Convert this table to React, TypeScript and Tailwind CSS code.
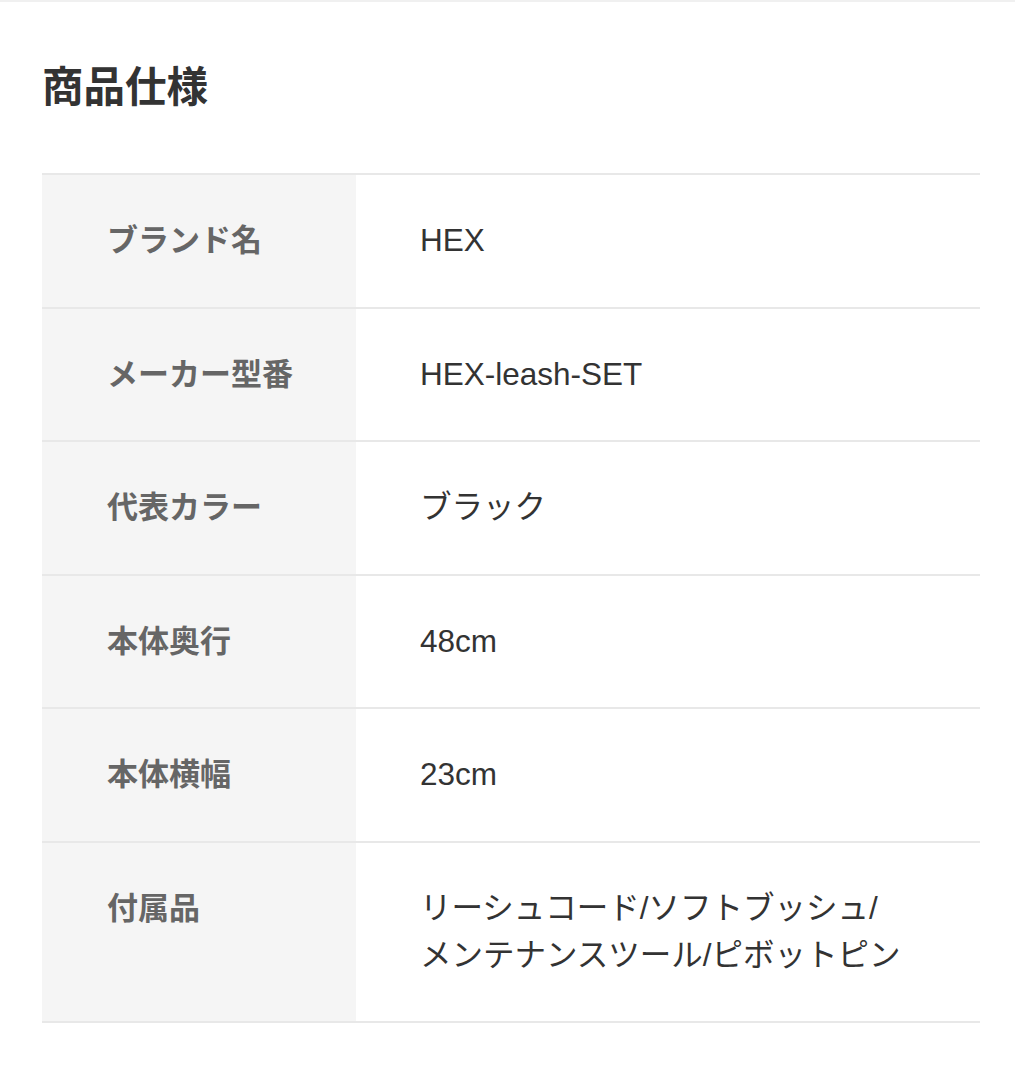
const specs = [
  { label: 'ブランド名', value: 'HEX' },
  { label: 'メーカー型番', value: 'HEX-leash-SET' },
  { label: '代表カラー', value: 'ブラック' },
  { label: '本体奥行', value: '48cm' },
  { label: '本体横幅', value: '23cm' },
  { label: '付属品', value: 'リーシュコード/ソフトブッシュ/\nメンテナンスツール/ピボットピン' }
];

export default function App() {
  return (
    <div
      className="min-h-screen bg-white"
      style={{ fontFamily: '"Liberation Sans", "Noto Sans CJK JP", sans-serif' }}
    >
      <div className="h-[2px] bg-[#f0f0f0]" />
      <div className="px-[42px] pr-[35px]">
        {/* Section title */}
        <h2 className="mt-[56px] text-[41.5px] leading-[60px] font-bold text-[#333]">商品仕様</h2>

        {/* Spec table */}
        <div className="mt-[55px] border-t-2 border-[#e8e8e8]">
          {specs.map((spec, index) => (
            <div key={index} className="flex border-b-2 border-[#e8e8e8]">
              <div className="w-[314px] flex-shrink-0 bg-[#f5f5f5] pl-[65px] pt-[42px] pb-[42.5px] text-[31px] leading-[47px] font-bold text-[#666]">
                {spec.label}
              </div>
              <div className="flex-1 pl-[64px] pt-[42px] pb-[42.5px] text-[31.5px] leading-[47px] text-[#333] whitespace-pre-line">
                {spec.value}
              </div>
            </div>
          ))}
        </div>
      </div>
    </div>
  );
}
